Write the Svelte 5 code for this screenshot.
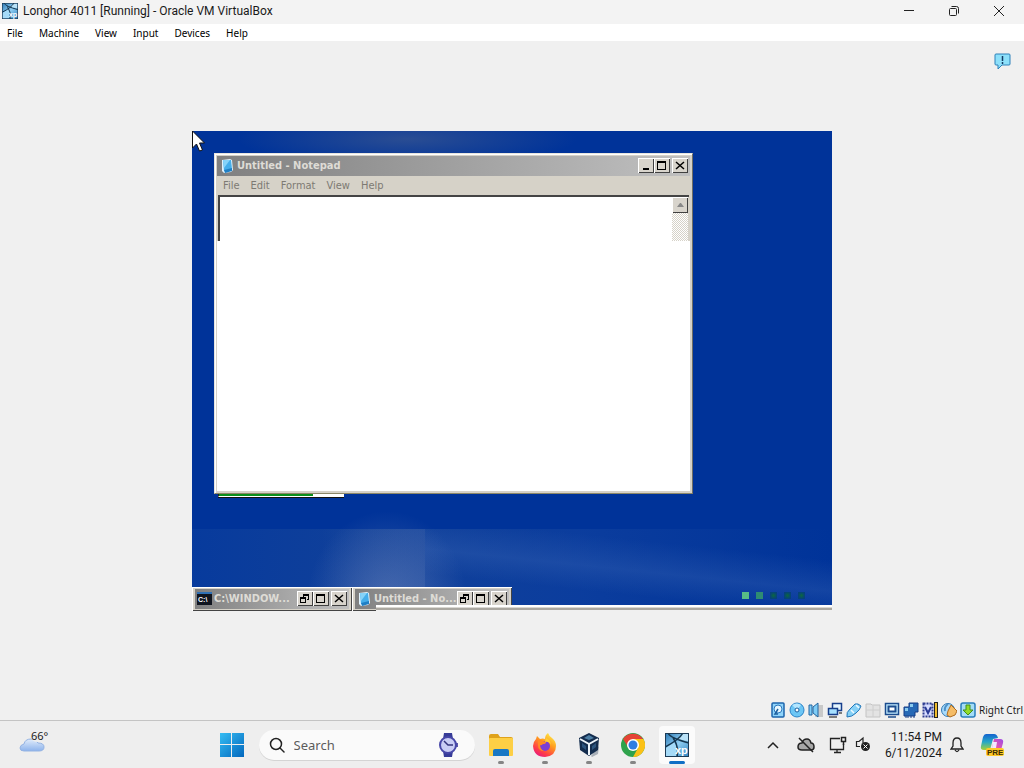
<script>
	const hostMenu = ['File', 'Machine', 'View', 'Input', 'Devices', 'Help'];
	const notepadMenu = ['File', 'Edit', 'Format', 'View', 'Help'];
	const minimized = [
		{ title: 'C:\\WINDOW...', icon: 'cmd' },
		{ title: 'Untitled - No...', icon: 'note' }
	];
	const statusIcons = ['disk', 'optical', 'audio', 'network', 'usb', 'folders', 'display', 'recording', 'cpu', 'mouse', 'keyboard'];
	const apps = [
		{ name: 'File Explorer', icon: 'explorer' },
		{ name: 'Firefox', icon: 'firefox' },
		{ name: 'Oracle VM VirtualBox', icon: 'vbox' },
		{ name: 'Google Chrome', icon: 'chrome' },
		{ name: 'Longhor 4011', icon: 'xp', active: true }
	];
	let query = $state('');
	let note = $state('');
</script>

{#snippet xpIcon(size)}
	<svg width={size} height={size} viewBox="0 0 24 24">
		<defs>
			<linearGradient id="xpg{size}" x1="0" y1="0" x2="1" y2="1">
				<stop offset="0" stop-color="#2a78b4" />
				<stop offset=".5" stop-color="#8fcdf2" />
				<stop offset="1" stop-color="#2f83c0" />
			</linearGradient>
		</defs>
		<rect width="24" height="24" fill="url(#xpg{size})" />
		<path d="M12 6L17 1h6v7z" fill="#b9e2f8" />
		<path d="M1 15l8-6 3 6-1 8H1z" fill="#a5daf7" />
		<path d="M3 0Q5 5 24 10M18 0Q14 7 0 14M8 5Q14 13 12 24" fill="none" stroke="#14364f" stroke-width="1.500" />
		<rect x=".5" y=".5" width="23" height="23" fill="none" stroke="#1c3b56" />
		<text x="10" y="21" font-family="Liberation Sans, sans-serif" font-size="11" font-weight="700" fill="#fff">xp</text>
	</svg>
{/snippet}

{#snippet noteIcon()}
	<svg width="15" height="15" viewBox="0 0 15 15">
		<path d="M2 2l8-1 2 1 1 10-2 2-7 1-2-2z" fill="#dff2fd" />
		<path d="M3 2h8l1 9-8 2z" fill="#45aeea" />
		<path d="M3 2h7L4 10z" fill="#86d3f8" />
		<path d="M4 12l8-2v3l-7 2z" fill="#1f7fc4" />
	</svg>
{/snippet}

{#snippet captionGlyph(kind)}
	<svg width="10" height="9" viewBox="0 0 10 9" shape-rendering="crispEdges">
		{#if kind === 'min'}
			<rect x="2" y="7" width="6" height="2" />
		{:else if kind === 'max'}
			<path d="M0 0h9v9h-9zM1 2v6h7v-6z" fill-rule="evenodd" />
		{:else if kind === 'restore'}
			<path d="M3 0h6v6h-2v-1h1v-3h-4v1h-1zM0 3h6v6h-6zM1 5v3h4v-3z" fill-rule="evenodd" />
		{:else}
			<path d="M1 1l8 7M9 1l-8 7" fill="none" stroke="#000" stroke-width="1.500" shape-rendering="auto" />
		{/if}
	</svg>
{/snippet}

{#snippet statusIcon(kind)}
	<svg width="16" height="16" viewBox="0 0 16 16">
		{#if kind === 'disk'}
			<rect x="2" y="1" width="12" height="14" rx="1" fill="#8fd4fb" stroke="#1c64ac" stroke-width="1.5" />
			<circle cx="8" cy="7" r="4" fill="#e6f7ff" stroke="#2b78be" />
			<path d="M8 7l-3 5h3" fill="none" stroke="#1c5f9e" stroke-width="1.5" />
		{:else if kind === 'optical'}
			<circle cx="8" cy="8" r="7" fill="#6cc6f5" stroke="#2a83c8" />
			<path d="M8 8L3 3q5-3 9 0z" fill="#b4e6ff" />
			<circle cx="8" cy="8" r="2" fill="#fff" stroke="#1c5f9e" />
		{:else if kind === 'audio'}
			<path d="M9 3h6v12H7z" fill="#c9c9c9" />
			<path d="M1 3h3v10H1zM5 5l5-4v14l-5-4z" fill="#7fcdf7" stroke="#22659f" />
		{:else if kind === 'network'}
			<rect x="5.500" y="1.500" width="9" height="7" fill="#e5f6ff" stroke="#173f8c" stroke-width="1.500" />
			<rect x="1.500" y="6.500" width="9" height="6" fill="#a6e0ff" stroke="#173f8c" stroke-width="1.500" />
			<path d="M2 15h8M12 11h3" stroke="#555" stroke-width="1.5" />
		{:else if kind === 'usb'}
			<path d="M1 15q-1-5 3-8l5-5q3-1 6 2-1 4-5 7-4 4-9 4z" fill="#85d0f6" stroke="#2477b9" />
			<path d="M5 8l3 3M10 3l3 3" stroke="#eefaff" stroke-width="1.500" />
		{:else if kind === 'folders'}
			<path d="M1 2h5l1 1h8v12H1z" fill="#e3e3e3" stroke="#c4c4c4" />
			<path d="M1 8h14M8 4v11" stroke="#cecece" />
		{:else if kind === 'display'}
			<rect x="1.500" y="1.500" width="13" height="11" fill="#c5ecff" stroke="#1b4c8e" stroke-width="1.500" />
			<rect x="4.500" y="4.500" width="7" height="5" fill="#fff" stroke="#1b4c8e" stroke-width="2" />
			<path d="M4 15h8" stroke="#1b4c8e" stroke-width="1.500" />
		{:else if kind === 'recording'}
			<path d="M6 1h9v9h-3v4H1V5h5z" fill="#2669b6" stroke="#163e87" />
			<path d="M7 2h3v3H7zM2 6h3v3H2z" fill="#8bcbef" />
			<path d="M3 14v2M5 14v2M8 14v2M11 14v2" stroke="#163e87" />
		{:else if kind === 'cpu'}
			<rect x="1.500" y="1.500" width="9" height="13" fill="#d7ddff" stroke="#303f91" stroke-width="2" stroke-dasharray="2 1" />
			<path d="M3 5l3 6 3-6" fill="none" stroke="#293b96" stroke-width="2" />
			<rect x="12" width="4" height="16" fill="#222" />
			<rect x="13" y="1" width="2" height="14" fill="#f0bd2c" />
		{:else if kind === 'mouse'}
			<circle cx="7" cy="8" r="6.500" fill="#a8dafa" stroke="#2f78b4" />
			<path d="M7 2q-4 3-3 7" fill="none" stroke="#4d91c8" stroke-width="2" />
			<path d="M7 9l3-6 3 3 3 3-2 4-5 2-3-2z" fill="#f5bc66" stroke="#af6b1e" />
		{:else}
			<rect x="1" y="1" width="14" height="14" rx="2" fill="#a4ddf7" stroke="#287dbd" stroke-width="1.500" />
			<path d="M6 3h4v5h3l-5 5-5-5h3z" fill="#91dc2c" stroke="#438d1d" />
		{/if}
	</svg>
{/snippet}

{#snippet appIcon(kind)}
	{#if kind === 'explorer'}
		<svg width="24" height="24" viewBox="0 0 24 24">
			<path d="M0 3q0-2 2-2h7l2 3h11q2 0 2 2v4H0z" fill="#dfa21b" />
			<rect y="5" width="24" height="18" rx="1" fill="#fdcf45" />
			<path d="M4 23v-5q0-2 2-2h12q2 0 2 2v5z" fill="#1877c4" />
		</svg>
	{:else if kind === 'firefox'}
		<svg width="24" height="24" viewBox="0 0 24 24">
			<defs>
				<linearGradient id="fox" x1=".8" y1="0" x2=".2" y2="1">
					<stop offset="0" stop-color="#fff04a" />
					<stop offset=".4" stop-color="#ff9a1f" />
					<stop offset=".75" stop-color="#ff3d47" />
					<stop offset="1" stop-color="#e31587" />
				</linearGradient>
			</defs>
			<path d="M3 6l1-3 3 3q3-1 5 0 0-4 3-6 1 3 4 5 4 3 4 8 0 10-11 11Q1 24 0 13 0 9 3 6z" fill="url(#fox)" />
			<circle cx="12" cy="13" r="5" fill="#7b3fd4" />
			<path d="M5 8q3-2 5 0l3 1q0 2-3 2-2 2-3 1 0 4 4 6-6 0-6-6z" fill="#ff8a24" />
			<path d="M12 9q5-1 6 4 0-6-5-8z" fill="#ffcf35" />
		</svg>
	{:else if kind === 'vbox'}
		<svg width="24" height="24" viewBox="0 0 24 24">
			<path d="M14 23l8-10-1 8-6 3z" fill="#a9b0b8" />
			<path d="M12 0l10 5-1 12-9 6-9-6-1-12z" fill="#142d4e" />
			<path d="M3 6l9 5v11M21 6l-9 5" fill="none" stroke="#eef5fa" stroke-width="2" />
			<path d="M7 5l5-3 5 3-5 2z" fill="#4d7fa5" />
			<path d="M5 10l4 3v4l-4-3zM19 10l-4 3v4l4-3z" fill="#2d557e" />
		</svg>
	{:else if kind === 'chrome'}
		<svg width="24" height="24" viewBox="0 0 24 24">
			<circle cx="12" cy="12" r="12" fill="#2fa24c" />
			<path d="M2 6A12 12 0 0 1 22 6L12 7 7 14z" fill="#e54335" />
			<path d="M12 6h10.400A12 12 0 0 1 12 24l5-9z" fill="#fbc116" />
			<circle cx="12" cy="12" r="6" fill="#fff" />
			<circle cx="12" cy="12" r="4.500" fill="#2f7de1" />
		</svg>
	{:else}
		{@render xpIcon(24)}
	{/if}
{/snippet}

<div class="screen">
	<header class="titlebar">
		{@render xpIcon(16)}
		<h1>Longhor 4011 [Running] - Oracle VM VirtualBox</h1>
		<button aria-label="Minimize"><svg width="12" height="12"><path d="M1 5.500h10" /></svg></button>
		<button aria-label="Restore">
			<svg width="12" height="12"><rect x="1.500" y="3.500" width="7" height="7" rx="1" /><path d="M3.500 1.500h5q2 0 2 2v5" /></svg>
		</button>
		<button aria-label="Close"><svg width="12" height="12"><path d="M1 1l10 10M11 1L1 11" /></svg></button>
	</header>

	<nav class="menubar">
		{#each hostMenu as item}
			<button>{item}</button>
		{/each}
	</nav>

	<main>
		<button class="notify" aria-label="Notifications">
			<svg width="17" height="17" viewBox="0 0 17 17">
				<path d="M2 1h13q1 0 1 1v9q0 1-1 1H8l-4 4v-4H2q-1 0-1-1V2q0-1 1-1z" fill="#8de0fa" stroke="#2c80b9" />
				<path d="M8.500 3v5M8.500 9v2" stroke="#143c66" stroke-width="1.500" />
			</svg>
		</button>

		<div class="guest">
			<div class="progress"></div>

			<section class="notepad">
				<div class="caption">
					{@render noteIcon()}
					<span>Untitled - Notepad</span>
					<button aria-label="Minimize">{@render captionGlyph('min')}</button>
					<button aria-label="Maximize">{@render captionGlyph('max')}</button>
					<button class="close" aria-label="Close">{@render captionGlyph('close')}</button>
				</div>
				<div class="notepad-menu">
					{#each notepadMenu as item}
						<button>{item}</button>
					{/each}
				</div>
				<div class="edit">
					<textarea aria-label="Text" bind:value={note}></textarea>
					<div class="scroll">
						<button aria-label="Scroll up">
							<svg width="7" height="4" viewBox="0 0 7 4"><path d="M0 4l3-4h1l3 4z" fill="#888" /></svg>
						</button>
					</div>
				</div>
				<div class="blank"></div>
			</section>

			<div class="lights">
				<i class="on"></i><i class="half"></i><i></i><i></i><i></i>
			</div>

			<div class="minimized">
				{#each minimized as win}
					<div class="tile">
						<div class="caption">
							{#if win.icon === 'cmd'}
								<svg width="15" height="13" viewBox="0 0 15 13">
									<rect width="15" height="13" fill="#10151f" />
									<rect width="15" height="2" fill="#2f70b5" />
									<text x="1" y="10" font-family="Liberation Sans, sans-serif" font-size="7" font-weight="700" fill="#fff">C:\</text>
								</svg>
							{:else}
								{@render noteIcon()}
							{/if}
							<span>{win.title}</span>
							<button aria-label="Restore">{@render captionGlyph('restore')}</button>
							<button aria-label="Maximize">{@render captionGlyph('max')}</button>
							<button class="close" aria-label="Close">{@render captionGlyph('close')}</button>
						</div>
					</div>
				{/each}
			</div>
			<div class="guest-bar"></div>

			<svg class="cursor" width="13" height="21" viewBox="0 0 13 21">
				<path d="M.5 0v17l4-4 3 7 3-1-3-7h5z" fill="#fff" stroke="#111" />
			</svg>
		</div>
	</main>

	<div class="status">
		{#each statusIcons as kind}
			{@render statusIcon(kind)}
		{/each}
		<span>Right Ctrl</span>
	</div>

	<footer class="taskbar">
		<button class="weather" aria-label="Weather, 66 degrees">
			<svg width="26" height="17" viewBox="0 0 26 17">
				<defs>
					<linearGradient id="cloud" x1="0" y1="0" x2="0" y2="1">
						<stop offset="0" stop-color="#e2edfb" />
						<stop offset="1" stop-color="#8db3ec" />
					</linearGradient>
				</defs>
				<path d="M5 15q-4 0-4-3 0-3 4-4 1-5 7-5 5 0 7 4 6 0 6 4 0 4-5 4z" fill="url(#cloud)" stroke="#94b3e3" />
			</svg>
			<span>66°</span>
		</button>

		<div class="center">
			<button class="start" aria-label="Start">
				<svg width="24" height="24" viewBox="0 0 24 24">
					<defs>
						<linearGradient id="win" x1="0" y1="0" x2="1" y2="1">
							<stop offset="0" stop-color="#35bdf3" />
							<stop offset="1" stop-color="#0367bd" />
						</linearGradient>
					</defs>
					<path d="M0 0h11v11H0zM12 0h12v11H12zM0 12h11v12H0zM12 12h12v12H12z" fill="url(#win)" />
				</svg>
			</button>
			<label class="search">
				<svg width="16" height="16" viewBox="0 0 16 16" fill="none" stroke="#222" stroke-width="1.500">
					<circle cx="7" cy="7" r="5.500" /><path d="M11 11l4 4" stroke-linecap="round" />
				</svg>
				<input type="text" placeholder="Search" aria-label="Search" bind:value={query} />
				<svg width="20" height="24" viewBox="0 0 20 24">
					<path d="M6 0h8l1 6H5zM5 18h10l-1 6H6z" fill="#373c98" />
					<path d="M18 10h2v4h-2z" fill="#5b56aa" />
					<circle cx="10" cy="12" r="8" fill="#c9cdf6" stroke="#4747a8" stroke-width="2" />
					<path d="M6 8l4 4h5" fill="none" stroke="#34347d" stroke-width="1.500" />
				</svg>
			</label>
			<div class="apps">
				{#each apps as app}
					<button class:active={app.active} aria-label={app.name}>
						{@render appIcon(app.icon)}
					</button>
				{/each}
			</div>
		</div>

		<div class="tray">
			<button class="more" aria-label="Show hidden icons">
				<svg width="12" height="8" viewBox="0 0 12 8"><path d="M1 7l5-5 5 5" fill="none" stroke="#222" stroke-width="1.500" /></svg>
			</button>
			<button aria-label="OneDrive">
				<svg width="18" height="16" viewBox="0 0 18 16" fill="none" stroke="#222" stroke-width="1.500">
					<path d="M5 13q-4 0-4-3 0-4 4-4 1-4 5-4 3 0 4 4 3 0 3 4 0 3-3 3z" fill="#a7a7a7" />
					<path d="M2 1l14 14" />
				</svg>
			</button>
			<button class="pair" aria-label="Network and volume">
				<svg width="18" height="18" viewBox="0 0 18 18" fill="none" stroke="#222">
					<path d="M11 2.500H1.500v11h13V8M5 16.500h7M8 14v3" stroke-width="1.300" />
					<path d="M12.500 1.500h4v4h-4zM14.500 6v3" stroke-width="1.500" />
				</svg>
				<svg width="16" height="16" viewBox="0 0 16 16" fill="none" stroke="#222">
					<path d="M8 7V2L4 5.500H1.500v5H5" stroke-width="1.200" />
					<circle cx="10.500" cy="10.500" r="4.500" fill="#222" stroke="none" />
					<path d="M8.500 8.500l4 4M12.500 8.500l-4 4" stroke="#fff" />
				</svg>
			</button>
			<button class="clock"><span>11:54 PM</span><span>6/11/2024</span></button>
			<button class="bell" aria-label="Notification center">
				<svg width="14" height="16" viewBox="0 0 14 16" fill="none" stroke="#222" stroke-width="1.300">
					<path d="M1 12l2-3V6q0-5 4-5t4 5v3l2 3zM5 13q2 3 4 0" />
				</svg>
			</button>
			<button class="copilot" aria-label="Copilot (preview)">
				<svg width="25" height="24" viewBox="0 0 25 24">
					<defs>
						<linearGradient id="cp1" x1="0" y1="0" x2="0" y2="1">
							<stop offset="0" stop-color="#1463cf" />
							<stop offset=".5" stop-color="#25a8c8" />
							<stop offset="1" stop-color="#a7d235" />
						</linearGradient>
						<linearGradient id="cp2" x1="1" y1="0" x2="0" y2="1">
							<stop offset="0" stop-color="#9b4be8" />
							<stop offset=".5" stop-color="#e858aa" />
							<stop offset="1" stop-color="#ff944b" />
						</linearGradient>
					</defs>
					<path d="M6 1h8q3 0 4 4l-5 1-3 11H4q-4 0-3-4L3 4q1-3 3-3z" fill="url(#cp1)" />
					<path d="M14 6h6q4 0 3 4l-2 7q-1 4-5 4H8q3-1 4-6z" fill="url(#cp2)" />
					<path d="M13 9h4l-1 6h-4z" fill="#f4e8ff" />
					<rect x="6" y="15" width="18" height="8" rx="2" fill="#ffc928" />
					<text x="7" y="22" font-family="Liberation Sans, sans-serif" font-size="8" font-weight="700" fill="#3b2c00">PRE</text>
				</svg>
			</button>
		</div>
	</footer>
</div>

<style>
	:global(body) {
		margin: 0;
	}
	.screen {
		min-height: 100vh;
		display: flex;
		flex-direction: column;
		background: #f0f0f0;
		color: #1a1a1a;
		font-family: "Noto Sans", "Open Sans", sans-serif;
		font-size: 12px;
	}
	button {
		border: 0;
		padding: 0;
		background: none;
		font: inherit;
		color: inherit;
	}
	svg {
		display: block;
		flex: none;
	}
	.titlebar {
		height: 24px;
		display: flex;
		align-items: center;
		padding: 0 3px 2px 2px;
		box-sizing: border-box;
		background: #f3f3f3;
	}
	.titlebar h1 {
		flex: 1;
		margin: 0 0 0 5px;
		font-family: Roboto, sans-serif;
		font-size: 12px;
		font-weight: 400;
		white-space: nowrap;
	}
	.titlebar button {
		width: 45px;
		height: 20px;
		display: grid;
		place-items: center;
	}
	.titlebar button svg {
		fill: none;
		stroke: #222;
	}
	.menubar {
		height: 17px;
		display: flex;
		gap: 16px;
		padding: 0 7px;
		background: #fff;
		font-size: 10px;
		color: #000;
	}
	main {
		flex: 1;
		display: flex;
		align-items: center;
		justify-content: center;
		position: relative;
	}
	.notify {
		position: absolute;
		top: 12px;
		right: 13px;
	}
	.guest {
		position: relative;
		width: 640px;
		max-width: 100%;
		height: 480px;
		overflow: hidden;
		background:
			radial-gradient(ellipse 80px 90px at 195px 470px, #6a84bb88, transparent),
			linear-gradient(to right, transparent, #4a6cae55) 130px 398px / 103px 82px no-repeat,
			linear-gradient(6deg, transparent 30%, #3a66b555 50%, transparent 75%) 233px 398px / 407px 82px no-repeat,
			linear-gradient(to right, #164aa455, #24509a77 30%, #1c4ca466 60%, transparent) 0 398px / 100% 82px no-repeat,
			radial-gradient(ellipse 170px 26px at 215px 8px, #3f5a90aa, transparent),
			#003399;
		font-family: "DejaVu Sans Condensed", "DejaVu Sans", sans-serif;
		font-size: 11px;
	}
	.progress {
		position: absolute;
		left: 26px;
		top: 360px;
		width: 126px;
		height: 6px;
		box-sizing: border-box;
		border-left: 1px solid #222;
		border-bottom: 1px solid #fff;
		background: linear-gradient(to right, #0a8f1a 94px, #fff 94px);
		box-shadow: 0 1px #111;
	}
	.notepad {
		position: absolute;
		left: 22px;
		top: 22px;
		width: 479px;
		height: 341px;
		box-sizing: border-box;
		display: flex;
		flex-direction: column;
		padding: 2px;
		border: 1px solid;
		border-color: #e8e6e0 #6f6e64 #8b8768 #e8e6e0;
		background: #d6d2c8;
		box-shadow: inset 1px 1px #fff;
	}
	.caption {
		display: flex;
		align-items: center;
		height: 20px;
		padding: 0 2px;
		background: linear-gradient(to right, #808080, #c0c0c0);
	}
	.caption span {
		flex: 1;
		min-width: 0;
		margin-left: 2px;
		overflow: hidden;
		white-space: nowrap;
		font-weight: 700;
		color: #dedcd6;
	}
	.caption button,
	.scroll button {
		width: 16px;
		height: 15px;
		display: grid;
		place-items: center;
		background: #d8d4cc;
		box-shadow: inset 1px 1px #fff, inset -1px -1px #404040;
	}
	.caption .close {
		margin-left: 2px;
	}
	.notepad .caption {
		flex: none;
		padding-left: 3px;
	}
	.notepad-menu {
		display: flex;
		gap: 11px;
		height: 19px;
		padding: 0 6px;
		color: #7d7a73;
	}
	.edit {
		display: flex;
		height: 46px;
		margin: 0 1px;
		box-sizing: border-box;
		border: 0 solid #444;
		border-width: 2px 0 0 2px;
	}
	.edit textarea {
		flex: 1;
		border: 0;
		padding: 0;
		resize: none;
		outline: 0;
		background: #fff;
	}
	.scroll {
		width: 16px;
		margin-right: 1px;
		background: repeating-conic-gradient(#d6d2c8 0 25%, #fff 0 50%) 0 0 / 2px 2px;
	}
	.scroll button {
		height: 16px;
	}
	.blank {
		flex: 1;
		background: #fff;
	}
	.lights {
		position: absolute;
		right: 27px;
		top: 461px;
		display: flex;
		gap: 7px;
	}
	.lights i {
		width: 7px;
		height: 7px;
		background: radial-gradient(#0c6740, #06427a 70%);
	}
	.lights .on {
		background: #59bd86;
	}
	.lights .half {
		background: #2f8c72;
	}
	.minimized {
		position: absolute;
		left: 0;
		bottom: 0;
		display: flex;
	}
	.tile {
		width: 160px;
		height: 24px;
		box-sizing: border-box;
		padding: 2px 3px;
		background: #d6d2c8;
		box-shadow: inset 1px 1px #fff, inset -1px -1px #444;
	}
	.guest-bar {
		position: absolute;
		left: 184px;
		right: 0;
		bottom: 0;
		height: 6px;
		background: linear-gradient(to bottom, #fff 2px, #d9d7d2 2px, #d9d7d2 3px, #aaa7a0 3px, #aaa7a0 5px, #f0f0f0 5px);
	}
	.cursor {
		position: absolute;
		left: 0;
		top: 0;
	}
	.status {
		display: flex;
		align-items: center;
		justify-content: flex-end;
		gap: 3px;
		height: 20px;
		padding-right: 1px;
		font-size: 10px;
	}
	.taskbar {
		height: 48px;
		box-sizing: border-box;
		display: grid;
		grid-template-columns: minmax(0, 4fr) auto minmax(0, 6fr);
		align-items: center;
		border-top: 1px solid #c4c4c4;
		background: #eeeeee;
	}
	.weather {
		display: flex;
		align-items: center;
		justify-self: start;
		margin-left: 19px;
		position: relative;
	}
	.weather span {
		position: absolute;
		left: 12px;
		top: -6px;
		font-size: 11px;
		line-height: 12px;
		background: #eeeeee;
		border-radius: 6px 0 0 6px;
	}
	.center {
		display: flex;
		align-items: center;
	}
	.start {
		margin-right: 15px;
	}
	.search {
		display: flex;
		align-items: center;
		width: 216px;
		height: 30px;
		box-sizing: border-box;
		padding: 0 17px 0 10px;
		border-radius: 15px;
		background: #fafafa;
		box-shadow: 0 1px #d4d4d4;
	}
	.search input {
		flex: 1;
		min-width: 0;
		margin-left: 9px;
		padding: 0;
		border: 0;
		outline: 0;
		background: none;
		font: 13px "Noto Sans", "Open Sans", sans-serif;
	}
	.search input::placeholder {
		color: #5c5c5c;
	}
	.apps {
		display: flex;
		gap: 8px;
		margin-left: 8px;
	}
	.apps button {
		position: relative;
		width: 36px;
		height: 38px;
		display: grid;
		place-items: center;
		border-radius: 4px;
	}
	.apps button::after {
		content: "";
		position: absolute;
		bottom: 0;
		width: 6px;
		height: 3px;
		border-radius: 2px;
		background: #858585;
	}
	.apps .active {
		background: #fbfbfb;
	}
	.apps .active::after {
		width: 16px;
		background: #0f6fc5;
	}
	.tray {
		justify-self: end;
		display: flex;
		align-items: center;
		gap: 14px;
		margin-right: 19px;
	}
	.more {
		margin-right: 4px;
	}
	.pair {
		display: flex;
		gap: 8px;
	}
	.clock {
		display: flex;
		flex-direction: column;
		align-items: flex-end;
		font-family: Roboto, sans-serif;
		line-height: 16px;
	}
	.bell {
		margin-left: -6px;
	}
	.copilot {
		margin-left: 2px;
	}
</style>
